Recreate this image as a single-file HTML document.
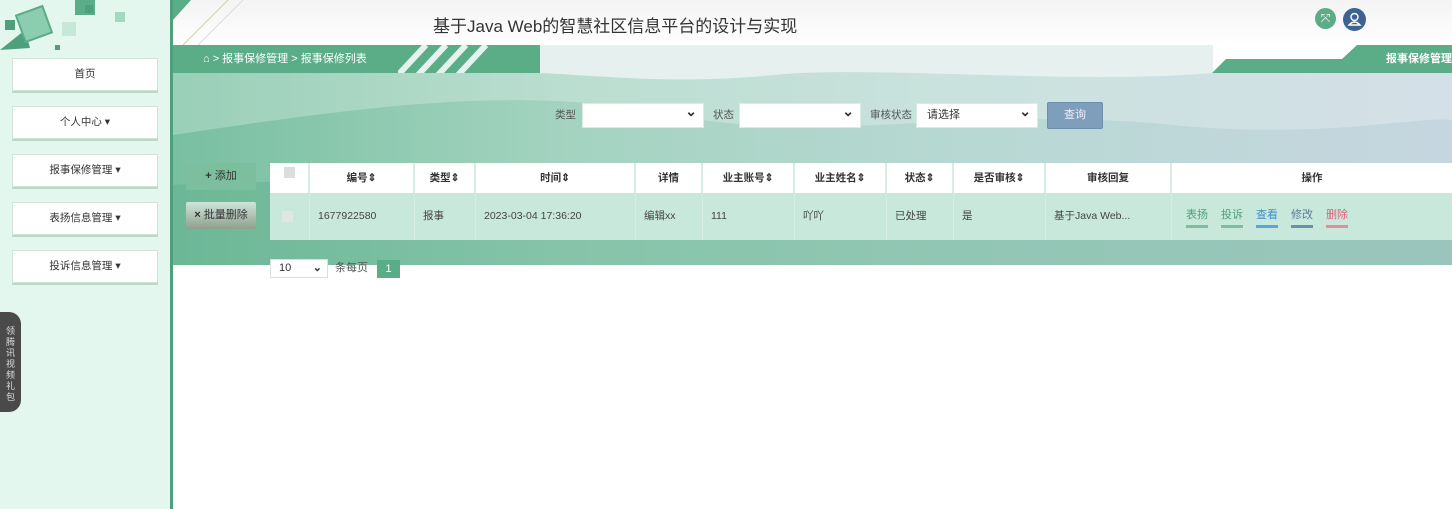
<!DOCTYPE html>
<html><head><meta charset="utf-8">
<style>
*{box-sizing:border-box;margin:0;padding:0}
body{width:1452px;height:509px;overflow:hidden;background:#fff;font-family:"Liberation Sans","Noto Sans CJK SC",sans-serif;font-size:11px;color:#333;position:relative}
.side{position:absolute;left:0;top:0;width:173px;height:509px;background:#e4f7ef;border-right:3px solid #4e9f7b}
.menu{position:absolute;left:12px;width:146px;height:33px;background:#fff;border:1px solid #cfe3d9;box-shadow:0 2px 0 #b9d8c8;text-align:center;line-height:31px;font-size:10.5px;color:#333}
.hdr{position:absolute;left:173px;top:0;width:1279px;height:45px;background:linear-gradient(#f3f3f3,#fff)}
.title{position:absolute;left:433px;top:12px;font-size:17px;color:#333}
.band{position:absolute;left:173px;top:45px;width:1279px;height:220px;background:linear-gradient(90deg,#78bfa0 0%,#a3d3c0 30%,#b7d8d2 60%,#c6d6e0 100%);overflow:hidden}
.crumb{position:absolute;left:173px;top:45px;width:367px;height:28px;background:#5aad86;color:#fff;font-size:11px;line-height:28px;padding-left:30px}
.th{position:absolute;top:163px;height:30px;background:#fff;border-right:2px solid #d5ede2;text-align:center;line-height:30px;font-weight:bold;font-size:10.5px;color:#333}
.td{position:absolute;top:193px;height:47px;line-height:47px;border-right:1px solid #d5ede2;padding-left:8px;font-size:10.5px;color:#444}
.sel{position:absolute;top:103px;height:25px;background:#fff;border:1px solid #d9ece3;font-size:11px;line-height:23px;padding-left:10px}
.sel:after{content:"⌄";position:absolute;right:6px;top:-4px;font-size:14px;font-weight:bold}
.lab{position:absolute;top:103px;line-height:25px;font-size:10.5px;color:#555}
.op{position:absolute;top:206px;font-size:11px;padding-bottom:3px;border-bottom:3px solid}
</style></head><body>
<div class="side">
 <svg width="170" height="60" style="position:absolute;left:0;top:0">
  <polygon points="0,50 25,30 30,48" fill="#4e9f7b"/>
  <rect x="20" y="10" width="28" height="28" fill="#8ccdb0" stroke="#5aad86" stroke-width="2" transform="rotate(-20 34 24)"/>
  <rect x="75" y="0" width="20" height="15" fill="#5aad86"/>
  <rect x="85" y="5" width="8" height="8" fill="#4e9f7b"/>
  <rect x="115" y="12" width="10" height="10" fill="#a3d8c1"/>
  <rect x="62" y="22" width="14" height="14" fill="#c6e8d8"/>
  <rect x="55" y="45" width="5" height="5" fill="#4e9f7b"/>
  <rect x="5" y="20" width="10" height="10" fill="#4e9f7b"/>
 </svg>
 <div class="menu" style="top:58px">首页</div>
 <div class="menu" style="top:106px">个人中心 ▾</div>
 <div class="menu" style="top:154px">报事保修管理 ▾</div>
 <div class="menu" style="top:202px">表扬信息管理 ▾</div>
 <div class="menu" style="top:250px">投诉信息管理 ▾</div>
 <div style="position:absolute;left:0;top:312px;width:21px;height:100px;background:#4a4a4a;border-radius:0 12px 12px 0;color:#ddd;font-size:9px;line-height:11px;text-align:center;padding-top:14px">领<br>腾<br>讯<br>视<br>频<br>礼<br>包</div>
</div>
<div class="hdr">
 <svg width="80" height="45" style="position:absolute;left:0;top:0"><polygon points="0,0 18,0 0,20" fill="#5aad86"/><line x1="10" y1="45" x2="55" y2="0" stroke="#d8cfa0"/><line x1="25" y1="45" x2="70" y2="0" stroke="#ddd"/></svg>
</div>
<div class="title">基于Java Web的智慧社区信息平台的设计与实现</div>
<div style="position:absolute;left:1315px;top:8px;width:21px;height:21px;border-radius:50%;background:#5aad86;color:#fff;text-align:center;line-height:21px;font-size:12px">⤧</div>
<div style="position:absolute;left:1343px;top:8px;width:23px;height:23px;border-radius:50%;background:#3d6390"><svg width="23" height="23"><circle cx="11.5" cy="9" r="3.5" fill="none" stroke="#fff" stroke-width="1.4"/><path d="M6 17 Q11.5 11 17 17 Z" fill="none" stroke="#fff" stroke-width="1.4"/></svg></div>
<div class="band">
 <svg width="1279" height="220" style="position:absolute;left:0;top:0">
  <path d="M0,90 C200,60 350,40 500,70 C650,100 800,60 1000,80 C1150,95 1250,70 1279,75 L1279,0 L0,0Z" fill="#fff" opacity=".25"/>
  <path d="M367,0 L1040,0 L1040,28 C900,40 700,20 600,30 C500,40 420,30 367,28Z" fill="#e6f1ef"/>
  <path d="M0,140 C150,130 250,150 400,130 C550,115 700,150 850,135 C1000,120 1150,150 1279,140 L1279,220 L0,220Z" fill="#5aad86" opacity=".4"/>
 </svg>
 <div style="position:absolute;left:1040px;top:0;width:239px;height:28px;background:#fff"></div>
 <svg width="240" height="30" style="position:absolute;left:1039px;top:0"><polygon points="0,28 14,14 130,14 145,0 240,0 240,28" fill="#5aad86"/></svg>
 <div style="position:absolute;left:1213px;top:0;line-height:28px;color:#fff;font-weight:bold;font-size:11px">报事保修管理</div>
</div>
<div class="crumb">⌂ &gt; 报事保修管理 &gt; 报事保修列表
 <svg width="140" height="28" style="position:absolute;left:225px;top:0"><g stroke="#fff" stroke-width="6" opacity=".85"><line x1="0" y1="30" x2="28" y2="0"/><line x1="20" y1="30" x2="48" y2="0"/><line x1="40" y1="30" x2="68" y2="0"/><line x1="60" y1="30" x2="88" y2="0"/></g></svg>
</div>
<div class="lab" style="left:555px">类型</div>
<div class="sel" style="left:582px;width:122px"></div>
<div class="lab" style="left:713px">状态</div>
<div class="sel" style="left:739px;width:122px"></div>
<div class="lab" style="left:870px">审核状态</div>
<div class="sel" style="left:916px;width:122px">请选择</div>
<div style="position:absolute;left:1047px;top:102px;width:56px;height:27px;background:#7f9ebc;border:1px solid #6d8fae;border-radius:2px;color:#eef;text-align:center;line-height:25px">查询</div>
<div style="position:absolute;left:186px;top:163px;width:70px;height:27px;background:#7cbf9f;color:#333;text-align:center;line-height:27px;border-radius:2px"><b>+</b> 添加</div>
<div style="position:absolute;left:186px;top:202px;width:70px;height:27px;background:linear-gradient(#cfe5da,#8f9f8c);color:#333;text-align:center;line-height:27px;border-radius:2px"><b>×</b> 批量删除</div>
<div style="position:absolute;left:270px;top:163px;width:1182px;height:77px;background:#c9e8dc"></div>
<div class="th" style="left:270px;width:40px"><span style="display:inline-block;width:11px;height:11px;background:#ddd;margin-top:4px;vertical-align:top"></span></div>
<div class="th" style="left:310px;width:105px">编号⇕</div>
<div class="th" style="left:415px;width:61px">类型⇕</div>
<div class="th" style="left:476px;width:160px">时间⇕</div>
<div class="th" style="left:636px;width:67px">详情</div>
<div class="th" style="left:703px;width:92px">业主账号⇕</div>
<div class="th" style="left:795px;width:92px">业主姓名⇕</div>
<div class="th" style="left:887px;width:67px">状态⇕</div>
<div class="th" style="left:954px;width:92px">是否审核⇕</div>
<div class="th" style="left:1046px;width:126px">审核回复</div>
<div class="th" style="left:1172px;width:280px;border:none">操作</div>
<div class="td" style="left:270px;width:40px;padding-left:12px"><span style="display:inline-block;width:11px;height:11px;background:#dde8e3;vertical-align:middle"></span></div>
<div class="td" style="left:310px;width:105px">1677922580</div>
<div class="td" style="left:415px;width:61px">报事</div>
<div class="td" style="left:476px;width:160px">2023-03-04 17:36:20</div>
<div class="td" style="left:636px;width:67px">编辑xx</div>
<div class="td" style="left:703px;width:92px">111</div>
<div class="td" style="left:795px;width:92px">吖吖</div>
<div class="td" style="left:887px;width:67px">已处理</div>
<div class="td" style="left:954px;width:92px">是</div>
<div class="td" style="left:1046px;width:126px">基于Java Web...</div>
<div class="op" style="left:1186px;color:#4e9f7b;border-color:#7cbf9f">表扬</div>
<div class="op" style="left:1221px;color:#4e9f7b;border-color:#7cbf9f">投诉</div>
<div class="op" style="left:1256px;color:#3a8fd0;border-color:#5aa5dc">查看</div>
<div class="op" style="left:1291px;color:#5b7d99;border-color:#6d8fae">修改</div>
<div class="op" style="left:1326px;color:#e0607a;border-color:#e88a9c">删除</div>
<div style="position:absolute;left:270px;top:259px;width:58px;height:19px;background:#fff;border:1px solid #ddd;line-height:17px;padding-left:8px">10<span style="position:absolute;right:5px;font-weight:bold">⌄</span></div>
<div style="position:absolute;left:335px;top:259px;line-height:19px;color:#555">条每页</div>
<div style="position:absolute;left:377px;top:260px;width:23px;height:18px;background:#5aad86;color:#fff;text-align:center;line-height:18px">1</div>
</body></html>
